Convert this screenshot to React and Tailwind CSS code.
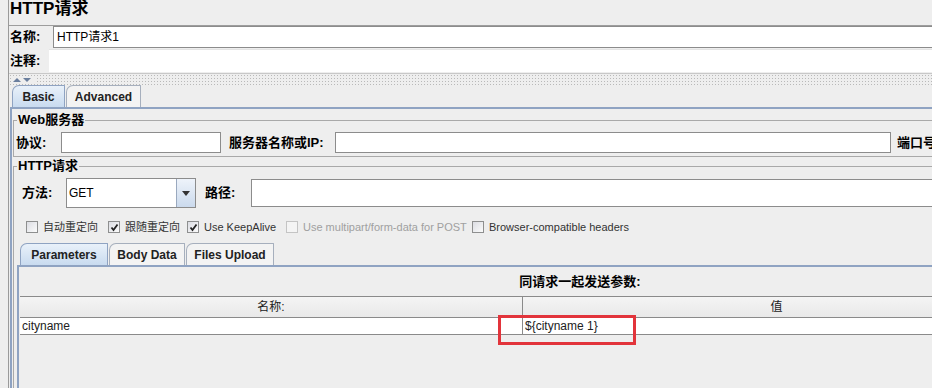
import React from "react";

const Box = ({ checked, disabled }) => (
  <span
    className={`w-[12px] h-[12px] shrink-0 border flex items-center justify-center ${
      disabled
        ? "border-[#c4c4c4] bg-[#f4f4f4]"
        : "border-[#8e8f8f] bg-gradient-to-br from-[#dcdde3] to-[#fbfbfb]"
    }`}
  >
    {checked && (
      <svg width="9" height="9" viewBox="0 0 9 9">
        <path d="M1.5 4.5 L3.5 7 L7.5 1.5" fill="none" stroke="#222" strokeWidth="1.8" />
      </svg>
    )}
  </span>
);

const Check = ({ label, checked, disabled, w }) => (
  <div className={`flex items-center gap-[5px] ${w}`}>
    <Box checked={checked} disabled={disabled} />
    <span className={`text-[11px] leading-[14px] whitespace-nowrap ${disabled ? "text-[#a0a0a0]" : "text-[#333]"}`}>
      {label}
    </span>
  </div>
);

const Tab = ({ label, active, w }) => (
  <div
    className={`h-[22px] ${w} border border-b-0 rounded-tl-[7px] rounded-tr-[1px] flex items-center justify-center text-[12px] font-bold ${
      active
        ? "bg-gradient-to-b from-[#e9f1fa] to-[#c9dbef] border-[#8fa3c2] text-[#222]"
        : "bg-[#f3f3f3] border-[#a6afbd] text-[#222]"
    }`}
  >
    {label}
  </div>
);

export default function App() {
  return (
    <div className="relative w-[932px] h-[388px] overflow-hidden bg-[#eeeeee] text-black font-['Liberation_Sans','Noto_Sans_CJK_SC',sans-serif]">
      <div className="ml-[8px] h-full border-l border-[#9a9a9a] flex flex-col">
        {/* title */}
        <div className="shrink-0 h-[25px] pl-[1px] text-[17px] leading-[17px] font-bold whitespace-nowrap">HTTP请求</div>

        {/* name / comment */}
        <div className="shrink-0 border-t border-[#9d9d9d]">
          <div className="flex items-center h-[22px]">
            <span className="w-[44px] pl-[1px] text-[13px] font-bold">名称:</span>
            <div className="flex-1 h-[22px] border border-r-0 border-[#8c8c8c] bg-white pl-[3px] text-[12px] leading-[20px]">
              HTTP请求1
            </div>
          </div>
          <div className="flex items-center h-[25px]">
            <span className="w-[40px] pl-[1px] text-[13px] font-bold">注释:</span>
            <div className="flex-1 h-[23px] bg-white border-t border-[#e4e4e4]" />
          </div>
        </div>

        {/* splitter */}
        <div className="shrink-0 h-[12px] flex items-center border-t border-[#c8c8c8] bg-[radial-gradient(#b9b9b9_0.8px,transparent_0.9px)] bg-[length:3px_3px]">
          <svg width="24" height="8" viewBox="0 0 24 8" className="ml-[3px] bg-[#eeeeee]">
            <path d="M1 6 L5 2 L9 6 Z" fill="#6b7f9e" />
            <path d="M11 2 L19 2 L15 6 Z" fill="#6b7f9e" />
          </svg>
        </div>

        {/* tabs */}
        <div className="shrink-0 flex items-end h-[22px] pl-[3px] gap-[1px]">
          <Tab label="Basic" active w="w-[53px]" />
          <Tab label="Advanced" w="w-[75px]" />
        </div>

        {/* tab panel */}
        <div className="flex-1 min-h-0 overflow-hidden ml-[1px] border-t-2 border-l-2 border-[#8fa3c2]">
          <div className="pt-[4px] pl-[1px]">
            <fieldset className="border border-r-0 border-[#a9a9a9] px-[2px] pb-[3px]">
              <legend className="ml-[1px] px-[1px] text-[13px] leading-[14px] font-bold">Web服务器</legend>
              <div className="mt-[5px] h-[21px] flex items-center whitespace-nowrap">
                <span className="w-[45px] text-[13px] font-bold">协议:</span>
                <div className="w-[160px] h-[21px] border border-[#8c8c8c] bg-white" />
                <span className="ml-[8px] w-[106px] text-[13px] font-bold">服务器名称或IP:</span>
                <div className="w-[556px] h-[21px] border border-[#8c8c8c] bg-white" />
                <span className="ml-[6px] text-[13px] font-bold">端口号:</span>
              </div>
            </fieldset>

            <fieldset className="mt-[2px] border border-r-0 border-b-0 border-[#a9a9a9] px-[2px] h-[300px]">
              <legend className="ml-[1px] px-[1px] text-[13px] leading-[14px] font-bold">HTTP请求</legend>
              <div className="mt-[5px] h-[30px] flex items-center whitespace-nowrap">
                <span className="w-[50px] pl-[6px] text-[13px] font-bold">方法:</span>
                <div className="w-[130px] h-[30px] border border-[#8c8c8c] bg-white flex">
                  <span className="flex-1 pl-[2px] text-[12px] leading-[28px]">GET</span>
                  <span className="w-[19px] h-full border-l border-[#9aa9bf] bg-gradient-to-b from-[#eef3fa] to-[#cbdaed] flex items-center justify-center">
                    <svg width="8" height="5" viewBox="0 0 8 5">
                      <path d="M0 0 H8 L4 5 Z" fill="#333" />
                    </svg>
                  </span>
                </div>
                <span className="ml-[9px] w-[46px] text-[13px] font-bold">路径:</span>
                <div className="flex-1 h-[28px] border border-r-0 border-[#8c8c8c] bg-white" />
              </div>

              <div className="mt-[12px] h-[14px] pl-[10px] flex items-center">
                <Check label="自动重定向" w="w-[82px]" />
                <Check label="跟随重定向" checked w="w-[79px]" />
                <Check label="Use KeepAlive" checked w="w-[99px]" />
                <Check label="Use multipart/form-data for POST" disabled w="w-[186px]" />
                <Check label="Browser-compatible headers" w="w-[200px]" />
              </div>

              {/* sub tabs */}
              <div className="mt-[9px] ml-[1px]">
                <div className="flex items-end h-[22px] pl-[3px] gap-[1px]">
                  <Tab label="Parameters" active w="w-[88px]" />
                  <Tab label="Body Data" w="w-[76px]" />
                  <Tab label="Files Upload" w="w-[88px]" />
                </div>
                <div className="border-t-2 border-l-2 border-[#8fa3c2] h-[140px]">
                  <div className="ml-[1px] w-[1120px]">
                    <div className="mt-[8px] h-[14px] text-center text-[13px] leading-[14px] font-bold">同请求一起发送参数:</div>
                    <div className="mt-[7px] w-[1010px] border-t border-[#8a8a8a]">
                      <div className="flex h-[21px] bg-gradient-to-b from-[#f4f4f4] to-[#e9e9e9] border-b border-[#8a8a8a] text-[12px] text-[#222]">
                        <div className="w-[503px] border-r border-[#8a8a8a] flex items-center justify-center">名称:</div>
                        <div className="flex-1 flex items-center justify-center">值</div>
                      </div>
                      <div className="flex h-[17px] bg-white border-b border-[#8a8a8a] text-[12px] leading-[16px] text-[#222]">
                        <div className="w-[503px] pl-[2px] border-r border-[#8a8a8a]">cityname</div>
                        <div className="flex-1 pl-[2px]">{"${cityname 1}"}</div>
                      </div>
                    </div>
                  </div>
                </div>
              </div>
            </fieldset>
          </div>
        </div>
      </div>

      {/* highlight */}
      <div className="absolute left-[498px] top-[315px] w-[138px] h-[30px] border-[3px] border-[#e2343b]" />
    </div>
  );
}
